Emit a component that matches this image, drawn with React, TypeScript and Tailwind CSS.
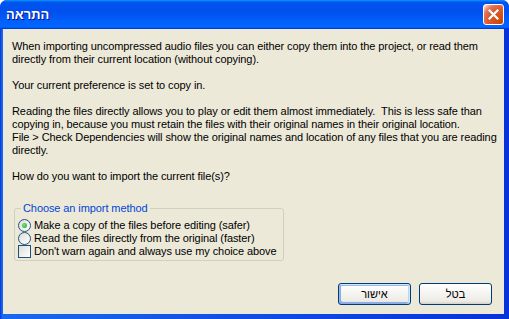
import React from "react";

const font = { fontFamily: '"Liberation Sans", Arial, sans-serif' };

function Radio({ checked }: { checked?: boolean }) {
  return (
    <span className="relative inline-block w-[13px] h-[13px] shrink-0 rounded-full border border-[#1c5180] bg-[linear-gradient(135deg,#dcdcd7,#ffffff)]">
      {checked && (
        <span className="absolute left-[3px] top-[3px] w-[5px] h-[5px] rounded-full bg-[radial-gradient(circle_at_40%_40%,#7fe07f,#21a121)]" />
      )}
    </span>
  );
}

function Checkbox() {
  return (
    <span className="inline-block w-[13px] h-[13px] shrink-0 border border-[#1c5180] bg-[linear-gradient(135deg,#dcdcd7,#ffffff)]" />
  );
}

export default function App() {
  return (
    <div className="w-[509px] h-[319px] bg-white" style={font}>
      <div className="w-[509px] h-[319px] flex flex-col rounded-t-[7px] bg-[#0831d9] overflow-hidden">
        <div className="h-[29px] shrink-0 flex items-center justify-between pl-[6px] pr-[5px] bg-[linear-gradient(180deg,#0997ff,#0053ee_8%,#0050ee_40%,#0066ff_88%,#0066ff_93%,#005bff_95%,#003dd7_96%,#003dd7)]">
          <span className="text-white font-bold text-[13px] leading-none [text-shadow:1px_1px_#0f1089]" dir="rtl">
            התראה
          </span>
          <span className="w-[21px] h-[21px] rounded-[3px] border border-white bg-[radial-gradient(circle_at_90%_90%,#cc4600_0%,#dc5a30_55%,#e0765a_75%,#ffc8b2_92%,#ffffff_100%)] flex items-center justify-center">
            <svg width="11" height="11" viewBox="0 0 11 11">
              <path d="M1.5 1.5 L9.5 9.5 M9.5 1.5 L1.5 9.5" stroke="white" strokeWidth="2.2" strokeLinecap="square" />
            </svg>
          </span>
        </div>
        <div className="flex-1 flex pl-[3px] pr-[5px] pb-[5px] bg-[linear-gradient(90deg,#0831d9,#166aee_2px,#0831d9)]">
          <div className="flex-1 flex flex-col bg-[#ece9d8] text-black text-[11px] leading-[13px]">
            <div className="pl-[9px] pt-[11px] whitespace-nowrap tracking-[-0.09px]">
              <div>
                When importing uncompressed audio files you can either copy them into the project, or read them
                <br />
                directly from their current location (without copying).
              </div>
              <div className="mt-[13px]">Your current preference is set to copy in.</div>
              <div className="mt-[13px]">
                Reading the files directly allows you to play or edit them almost immediately.&nbsp; This is less safe than
                <br />
                copying in, because you must retain the files with their original names in their original location.
                <br />
                File &gt; Check Dependencies will show the original names and location of any files that you are reading
                <br />
                directly.
              </div>
              <div className="mt-[13px]">How do you want to import the current file(s)?</div>
              <fieldset className="mt-[19px] ml-[2px] w-[270px] border border-[#d0d0bf] rounded-[3px] pl-[3px] pb-[2px]">
                <legend className="ml-[3px] px-[2px] text-[#0046d5]">Choose an import method</legend>
                <div className="mt-[4px] flex flex-col">
                  <label className="h-[13px] flex items-center gap-[3px]">
                    <Radio checked />
                    <span>Make a copy of the files before editing (safer)</span>
                  </label>
                  <label className="h-[13px] flex items-center gap-[3px]">
                    <Radio />
                    <span>Read the files directly from the original (faster)</span>
                  </label>
                  <label className="h-[13px] flex items-center gap-[3px]">
                    <Checkbox />
                    <span>Don't warn again and always use my choice above</span>
                  </label>
                </div>
              </fieldset>
            </div>
            <div className="flex-1" />
            <div className="flex justify-end gap-[8px] pr-[12px] pb-[9px]">
              <button className="w-[73px] h-[22px] rounded-[3px] border border-[#003c74] bg-[linear-gradient(180deg,#ffffff,#ecebe6_86%,#d6d0c5)] shadow-[inset_-1px_1px_#cee7ff,inset_1px_2px_#98b8ea,inset_-2px_0_#bcd4f6,inset_1px_-1px_#89ade4,inset_2px_-2px_#89ade4] text-[11px] text-black">
                אישור
              </button>
              <button className="w-[73px] h-[22px] rounded-[3px] border border-[#003c74] bg-[linear-gradient(180deg,#ffffff,#ecebe6_86%,#d6d0c5)] text-[11px] text-black">
                בטל
              </button>
            </div>
          </div>
        </div>
      </div>
    </div>
  );
}
